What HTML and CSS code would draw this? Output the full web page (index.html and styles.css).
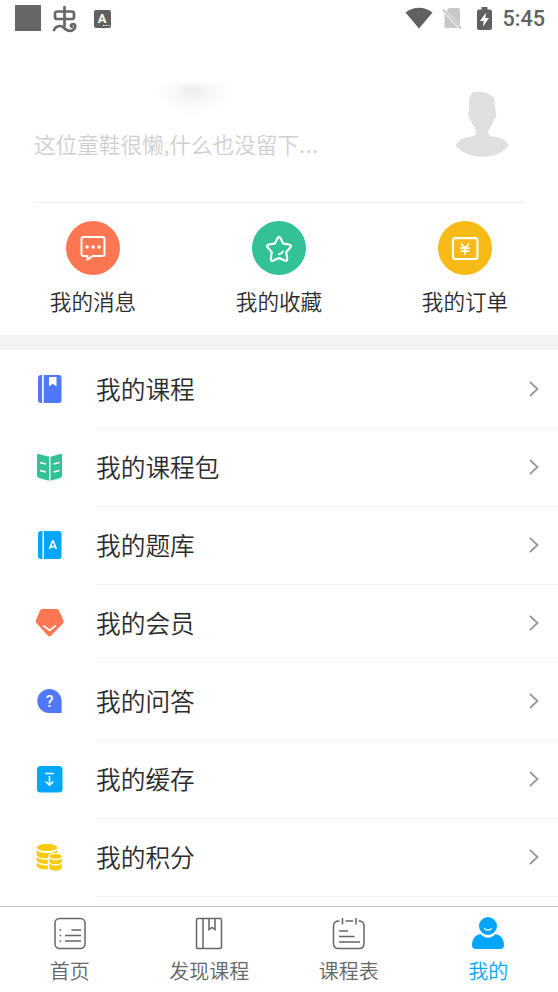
FILE: index.html
```html
<!DOCTYPE html>
<html lang="zh-CN">
<head>
<meta charset="utf-8">
<title>我的</title>
<link rel="stylesheet" href="styles.css">
</head>
<body>
<div class="screen">
  <header class="status">
    <div class="status-left">
      <span class="block"></span>
      <svg width="26" height="28" viewBox="0 0 26 28" fill="none" stroke="#666" stroke-width="2.7" stroke-linecap="round" stroke-linejoin="round"><path d="M12.500 2v19M5 6.500h15a2 2 0 0 1 2 2V12a2 2 0 0 1-2 2H5a2 2 0 0 1-2-2V8.500a2 2 0 0 1 2-2z"/><path d="M2 25c2-4 6-5 9-3 3 3 7 5 10 3 3-2 3-6 0-6-2 0-3 2-1 3"/></svg>
      <svg class="app" width="17" height="18" viewBox="0 0 17 18"><rect width="17" height="18" rx="2" fill="#606060"/><text x="8" y="13" class="app-letter">A</text><path d="M9 15.500h1.400M11.500 15.500h1.400M14 15.500h1.400" stroke="#fff" stroke-width="1.200"/></svg>
    </div>
    <div class="status-right">
      <svg width="28" height="22" viewBox="0 0 28 22"><path d="M.5 5.500C8-1 20-1 27.500 5.500L14 21.500z" fill="#606060"/></svg>
      <svg class="sim" width="21" height="24" viewBox="0 0 21 24"><path d="M7 2h9q2 0 2 2v15.500L4.500 5zM2.500 7.500L16 22H4q-1.500 0-1.500-1.500z" fill="#c8c8c8"/><path d="M1 3.500l18 19" stroke="#c8c8c8" stroke-width="2"/></svg>
      <svg class="battery" width="15" height="23" viewBox="0 0 15 23"><path d="M4.500 0h6v2.500H13q2 0 2 2V21q0 2-2 2H2q-2 0-2-2V4.500q0-2 2-2h2.500z" fill="#606060"/><path d="M9 5.500L3 14h3.700L6 19.500 12 11H8.300z" fill="#fff"/></svg>
      <span class="time">5:45</span>
    </div>
  </header>

  <section class="profile">
    <div class="profile-text">
      <div class="name"><span class="smudge"></span></div>
      <p class="bio">这位童鞋很懒,什么也没留下<span class="dots">...</span></p>
    </div>
    <svg class="avatar" width="56" height="68" viewBox="0 0 56 68"><path d="M18 2.500Q17 1.500 19 1.200C29-.2 37 2.500 40 7c1.500 3 1 8 1.300 13.500q1.400.2.900 3.500c-.6 4-1.500 4.300-2.300 5C38.500 34.500 35 37 34.300 41c-.3 3 1.700 4 4.700 4.600 6 .8 12 2 15.700 8.400C50 61.500 39 66 28.500 66S7 61.500 1.500 54.500C5 48 11 46.500 17 45.500c4-.8 5.200-2 5-5-.5-5-4.500-7-5.600-12-1-1-1.700-1.500-2.200-4.500-.4-3 .2-3.500 1-3.500C15 14 14.500 5 18 2.500z" fill="#e0e0e0"/></svg>
  </section>

  <nav class="quick">
    <a class="quick-item">
      <svg width="54" height="54" viewBox="0 0 54 54"><circle cx="27" cy="27" r="27" fill="#ff7752"/><path d="M17.500 16h19q2 0 2 2v15q0 2-2 2H26.500l-5 3.700V35H17.500q-2 0-2-2V18q0-2 2-2z" fill="none" stroke="#fff" stroke-width="2" stroke-linejoin="round"/><path d="M21 26h.1M27 26h.1M33 26h.1" stroke="#fff" stroke-width="3.400" stroke-linecap="round"/></svg>
      <span>我的消息</span>
    </a>
    <a class="quick-item">
      <svg width="54" height="54" viewBox="0 0 54 54"><circle cx="27" cy="27" r="27" fill="#33c297"/><path d="M25.600 17q1.400-2.400 2.800 0l2.800 5.500 6.300 1.200q2.400.8 1 2.600L34.300 31l.9 7q-.2 2.600-2.600 1.600L27 37l-5.600 2.600q-2.400 1-2.600-1.600l.9-7-4.200-4.700q-1.400-1.800 1-2.600l6.300-1.200z" fill="none" stroke="#fff" stroke-width="2.200" stroke-linejoin="round"/><path d="M27 33.300q3-.6 4-3" fill="none" stroke="#fff" stroke-width="1.900" stroke-linecap="round"/></svg>
      <span>我的收藏</span>
    </a>
    <a class="quick-item">
      <svg width="54" height="54" viewBox="0 0 54 54"><circle cx="27" cy="27" r="27" fill="#f8ba16"/><rect x="15" y="17.200" width="24.400" height="20.800" rx="2.500" fill="none" stroke="#fff" stroke-width="2.200"/><path d="M23 22.500l4 4.500 4-4.500M22.200 27.200h9.600M22.800 30.200h8.400M27 27v6.800" fill="none" stroke="#fff" stroke-width="1.700"/></svg>
      <span>我的订单</span>
    </a>
  </nav>

  <main class="list">
    <a class="row">
      <svg class="icon" width="30" height="30" viewBox="0 0 30 30"><path d="M6 1h1v28H6q-3 0-3-3V4q0-3 3-3zM8.700 1H24q2.500 0 2.500 2.500v23Q26.500 29 24 29H8.700z" fill="#5078fa"/><path d="M14 3h7.500v9.500l-3.700-2.800-3.800 2.800z" fill="#fff"/></svg>
      <div class="label"><span>我的课程</span><svg width="10" height="16" viewBox="0 0 10 16"><path d="M1 1l7.500 7L1 15"/></svg></div>
    </a>
    <a class="row">
      <svg class="icon" width="30" height="30" viewBox="0 0 30 30"><path d="M2 3q0-1.500 2-1l10 2.700v24L4 26q-2-.6-2-2.500zM15.500 4.700L25 2q2-.5 2 1v20.500q0 2-2 2.500l-9.500 2.700z" fill="#33c297"/><path d="M5 10.500l6 1.500M5 18.500l6 1.500M18.500 12l6-1.500M18.500 20l6-1.500" stroke="#fff" stroke-width="1.500"/></svg>
      <div class="label"><span>我的课程包</span><svg width="10" height="16" viewBox="0 0 10 16"><path d="M1 1l7.500 7L1 15"/></svg></div>
    </a>
    <a class="row">
      <svg class="icon" width="30" height="30" viewBox="0 0 30 30"><path d="M6 1h1.500v28H6q-3 0-3-3V4q0-3 3-3zM9 1h15q2.500 0 2.500 2.500v23Q26.500 29 24 29H9z" fill="#04a6fb"/><path d="M14.500 19l3-8h.8l3 8M15.500 16.700h5" fill="none" stroke="#fff" stroke-width="1.600"/></svg>
      <div class="label"><span>我的题库</span><svg width="10" height="16" viewBox="0 0 10 16"><path d="M1 1l7.500 7L1 15"/></svg></div>
    </a>
    <a class="row">
      <svg class="icon" width="30" height="30" viewBox="0 0 30 30"><path d="M7 1h15q1.300 0 2 1.500l4.500 10q.7 1.500-.5 2.700L16 27.700q-1.500 1.600-3 0L1.500 15.300Q.3 14 .8 12.500L5 2.500Q5.700 1 7 1z" fill="#ff7752"/><path d="M8.300 17.500l6.300 5 6.300-5" fill="none" stroke="#fff" stroke-width="1.600"/></svg>
      <div class="label"><span>我的会员</span><svg width="10" height="16" viewBox="0 0 10 16"><path d="M1 1l7.500 7L1 15"/></svg></div>
    </a>
    <a class="row">
      <svg class="icon" width="30" height="30" viewBox="0 0 30 30"><path d="M14.300 3A12.300 12.300 0 0 1 26.600 15.300V27H14.300A12 12 0 0 1 14.300 3z" fill="#5078fa"/><text x="14.700" y="20.500" class="question">?</text></svg>
      <div class="label"><span>我的问答</span><svg width="10" height="16" viewBox="0 0 10 16"><path d="M1 1l7.500 7L1 15"/></svg></div>
    </a>
    <a class="row">
      <svg class="icon" width="30" height="30" viewBox="0 0 30 30"><rect x="2" y="2" width="25.500" height="26.500" rx="3.500" fill="#04a6fb"/><path d="M10.300 9.500h8.400M14.500 12v9M10.700 17.500l3.800 3.700 3.800-3.700" fill="none" stroke="#fff" stroke-width="1.600"/></svg>
      <div class="label"><span>我的缓存</span><svg width="10" height="16" viewBox="0 0 10 16"><path d="M1 1l7.500 7L1 15"/></svg></div>
    </a>
    <a class="row">
      <svg class="icon" width="30" height="30" viewBox="0 0 30 30"><g fill="#fbca09"><ellipse cx="12" cy="5.500" rx="10.200" ry="3.700"/><path d="M1.800 8q2 3 10.200 3t10.200-3V11H17q-4 1-4 4v1.500Q4 16.500 1.800 13.500zM1.800 15q2.500 3 11 3v4Q4 22 1.800 19zM1.800 20.500Q4 23.500 12.800 23.500V27.500Q4 27.500 1.800 24.500z"/><ellipse cx="20.500" cy="14.300" rx="6.200" ry="2.400"/><path d="M14.300 16q1.500 2.300 6.200 2.300t6.200-2.300v4q-1.500 2.300-6.200 2.300t-6.200-2.300zM14.300 21.200q1.500 2.300 6.200 2.300t6.200-2.300v5q-1.500 2.300-6.200 2.300t-6.200-2.300z"/></g></svg>
      <div class="label"><span>我的积分</span><svg width="10" height="16" viewBox="0 0 10 16"><path d="M1 1l7.500 7L1 15"/></svg></div>
    </a>
  </main>

  <footer class="tabs">
    <a class="tab">
      <svg width="34" height="34" viewBox="0 0 34 34"><rect x="2" y="2.500" width="30" height="30" rx="4.500"/><path d="M18.500 14h9.500M12 19.500h16M12 25h16M6.500 14h1.700M6.500 19.500h1.700M6.500 25h1.700"/></svg>
      <span>首页</span>
    </a>
    <a class="tab">
      <svg width="34" height="34" viewBox="0 0 34 34"><rect x="4.500" y="2.500" width="25" height="30" rx="1.500"/><path d="M11 2.500v30M17 2.500v11l3-2 3 2v-11"/></svg>
      <span>发现课程</span>
    </a>
    <a class="tab">
      <svg width="34" height="34" viewBox="0 0 34 34"><path d="M7.500 5Q1.500 5 1.500 10v17.500q0 5 5 5h20.500q5 0 5-5V10q0-5-5.500-5M13.500 5h7.500M10.500 2v6.500M24 2v6.500M7 15h9M7 20.500h15.500M7 26h21"/></svg>
      <span>课程表</span>
    </a>
    <a class="tab active">
      <svg width="34" height="34" viewBox="0 0 34 34"><path d="M9.500 18q3 3.700 7.500 3.700t7.500-3.700c5 .8 8.500 5 8.500 11q0 4-4 4H5q-4 0-4-4c0-6 3.500-10.200 8.500-11z"/><circle cx="17" cy="10" r="9"/><path d="M13.200 12.500q3.800 3.200 7.600 0" class="smile"/></svg>
      <span>我的</span>
    </a>
  </footer>
</div>
</body>
</html>
```
FILE: styles.css
```css
* { box-sizing: border-box; }

body {
  margin: 0;
  background: #fff;
  color: #2b2b2b;
  font-family: "Noto Sans CJK SC", sans-serif;
  font-weight: 350;
}

svg { display: block; flex: none; }

.screen {
  display: flex;
  flex-direction: column;
  width: 558px;
  height: 992px;
  overflow: hidden;
}

.status {
  display: flex;
  justify-content: space-between;
  height: 40px;
  padding: 5px 12px 0 15px;
}

.status-left, .status-right { display: flex; align-items: flex-start; }
.block { width: 26px; height: 26px; margin-right: 11px; background: #666; }
.app { margin: 5px 0 0 16px; }
.app-letter { font: bold 13px Roboto, sans-serif; fill: #fff; text-anchor: middle; }
.status-right svg:first-child { margin-top: 2px; }
.sim { margin: 1px 0 0 9px; }
.battery { margin: 2px 0 0 14px; }
.time {
  margin: 0 1px 0 10px;
  color: #606060;
  font: 500 21.6px/28px Roboto, sans-serif;
}

.profile {
  display: flex;
  justify-content: space-between;
  height: 163px;
  margin: 0 34px;
  padding: 40px 14px 0 0;
  border-bottom: 1px solid #eee;
}

.name { height: 48px; padding: 4px 0 0 120px; }
.smudge {
  display: block;
  width: 78px;
  height: 32px;
  background: radial-gradient(ellipse at 50% 22%, #ececec 0, #f8f8f8 35%, #fff 70%);
  filter: blur(2px);
}
.bio {
  margin: 0;
  color: #cfcfcf;
  font-size: 21.6px;
  line-height: 32px;
  white-space: nowrap;
}
.dots { letter-spacing: .9px; }
.avatar { margin-top: 11px; }

.quick {
  display: flex;
  justify-content: space-around;
  height: 147px;
  padding-top: 18px;
  border-bottom: 15px solid #f2f3f5;
}
.quick-item {
  display: flex;
  flex: 1;
  flex-direction: column;
  align-items: center;
  gap: 10px;
  font-size: 21.6px;
  line-height: 32px;
}

.list { flex: 1; padding-top: 1px; overflow: hidden; }
.row { display: flex; height: 78px; padding-left: 35px; }
.icon { margin: 23px 31px 0 0; }
.label {
  display: flex;
  flex: 1;
  align-items: center;
  justify-content: space-between;
  padding: 0 19px 2px 0;
  border-bottom: 1px solid #f3f3f3;
  font-size: 24.7px;
  line-height: 36px;
}
.label span { padding-bottom: 2px; }
.label path { fill: none; stroke: #999; stroke-width: 1.8; }

.question { font: 500 16px Roboto, sans-serif; fill: #fff; text-anchor: middle; }

.tabs {
  display: flex;
  height: 86px;
  padding-top: 9px;
  border-top: 1px solid #c8c8c8;
}
.tab {
  display: flex;
  flex: 1;
  flex-direction: column;
  align-items: center;
  gap: 6px;
  color: #666;
  font-size: 20px;
  line-height: 30px;
}
.tab svg { fill: none; stroke: #666; stroke-width: 1.5; }
.active { color: #04a6fb; }
.active svg { fill: #04a6fb; stroke: none; }
.active .smile { fill: none; stroke: #fff; stroke-width: 1.3; }
```
